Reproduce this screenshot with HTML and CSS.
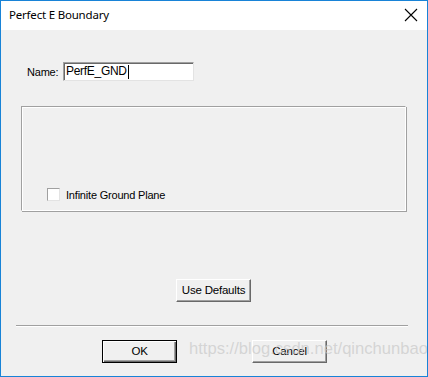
FILE: index.html
```html
<!DOCTYPE html>
<html lang="en">
<head>
    <meta charset="UTF-8">
    <title>Perfect E Boundary</title>
    <link rel="stylesheet" href="styles.css">
</head>
<body>
    <div class="dialog">
        <div class="titlebar">
            <span class="title">Perfect E Boundary</span>
            <span class="close">
                <svg width="14" height="14" viewBox="0 0 14 14"><path d="M1 1L13 13M13 1L1 13" stroke="#000" stroke-width="1.1" fill="none"/></svg>
            </span>
        </div>
        <div class="content">
            <div class="name-row">
                <label>Name:</label>
                <div class="textbox">PerfE_GND<span class="caret"></span></div>
            </div>
            <div class="groupbox">
                <div class="check-row">
                    <span class="checkbox"></span>
                    <span>Infinite Ground Plane</span>
                </div>
            </div>
            <div class="defaults-row">
                <div class="btn">Use Defaults</div>
            </div>
            <div class="separator"></div>
            <div class="buttons">
                <div class="btn btn-default">OK</div>
                <div class="btn">Cancel</div>
            </div>
        </div>
        <!-- 水印 -->
        <div class="watermark">https://blog.csdn.net/qinchunbao</div>
    </div>
</body>
</html>
```

FILE: styles.css
```css
body{
    margin: 0;
    font-family: "Liberation Sans", Arial, sans-serif;
    font-size: 11px;
    color: #000;
}
.dialog{
    position: relative;
    width: 428px;
    height: 377px;
    box-sizing: border-box;
    border: 1px solid #1883d7;
    background: #f0f0f0;
    overflow: hidden;
}
.titlebar{
    height: 29px;
    background: #ffffff;
    display: flex;
    align-items: center;
    justify-content: space-between;
    padding: 0 9px 0 8px;
}
.title{
    font-family: "Noto Sans", "Open Sans", sans-serif;
    font-size: 11.5px;
    letter-spacing: -0.2px;
    margin-top: -2px;
}
.close{
    display: flex;
    margin-top: -1px;
}
.content{
    padding: 32px 0 0 0;
}
.name-row{
    display: flex;
    align-items: center;
    padding-left: 26px;
}
.name-row label{
    width: 36px;
    letter-spacing: -0.2px;
}
.textbox{
    width: 127px;
    height: 17px;
    line-height: 17px;
    background: #fff;
    border-top: 1px solid #a0a0a0;
    border-left: 1px solid #a0a0a0;
    border-right: 1px solid #e3e3e3;
    border-bottom: 1px solid #e3e3e3;
    box-shadow: inset 1px 1px 0 #696969;
    padding-left: 2px;
    font-size: 12px;
    letter-spacing: -0.3px;
    display: flex;
    align-items: center;
}
.caret{
    display: inline-block;
    width: 1px;
    height: 14px;
    margin-left: 1px;
    background: #000;
}
.groupbox{
    margin: 25px 0 0 20px;
    width: 383px;
    height: 103px;
    border-top: 1px solid #a0a0a0;
    border-left: 1px solid #a0a0a0;
    border-right: 1px solid #ffffff;
    border-bottom: 1px solid #ffffff;
    box-shadow: inset 1px 1px 0 #fff, 1px 1px 0 #a0a0a0;
    display: flex;
    flex-direction: column;
    justify-content: flex-end;
}
.check-row{
    display: flex;
    align-items: center;
    padding: 0 0 9px 25px;
    letter-spacing: -0.2px;
}
.checkbox{
    width: 11px;
    height: 11px;
    background: #fff;
    border-top: 1px solid #a0a0a0;
    border-left: 1px solid #a0a0a0;
    border-right: 1px solid #e3e3e3;
    border-bottom: 1px solid #e3e3e3;
    margin-right: 6px;
}
.defaults-row{
    display: flex;
    padding: 68px 0 0 175px;
}
.btn{
    width: 73px;
    height: 21px;
    line-height: 21px;
    text-align: center;
    border-top: 1px solid #fff;
    border-left: 1px solid #fff;
    border-right: 1px solid #696969;
    border-bottom: 1px solid #696969;
    box-shadow: inset -1px -1px 0 #a0a0a0;
    font-size: 11.5px;
    letter-spacing: -0.2px;
}
.btn-default{
    border: 1px solid #000;
    box-shadow: inset 1px 1px 0 #fff, inset -1px -1px 0 #696969, inset -2px -2px 0 #a0a0a0;
}
.separator{
    margin: 23px 0 0 15px;
    width: 392px;
    height: 1px;
    background: #a0a0a0;
    border-bottom: 1px solid #fff;
}
.buttons{
    display: flex;
    gap: 75px;
    padding: 13px 0 0 101px;
}
.watermark{
    position: absolute;
    left: 188px;
    top: 338px;
    font-family: "Liberation Sans", Arial, sans-serif;
    font-size: 16.6px;
    color: rgba(200, 200, 200, 0.7);
}
```
